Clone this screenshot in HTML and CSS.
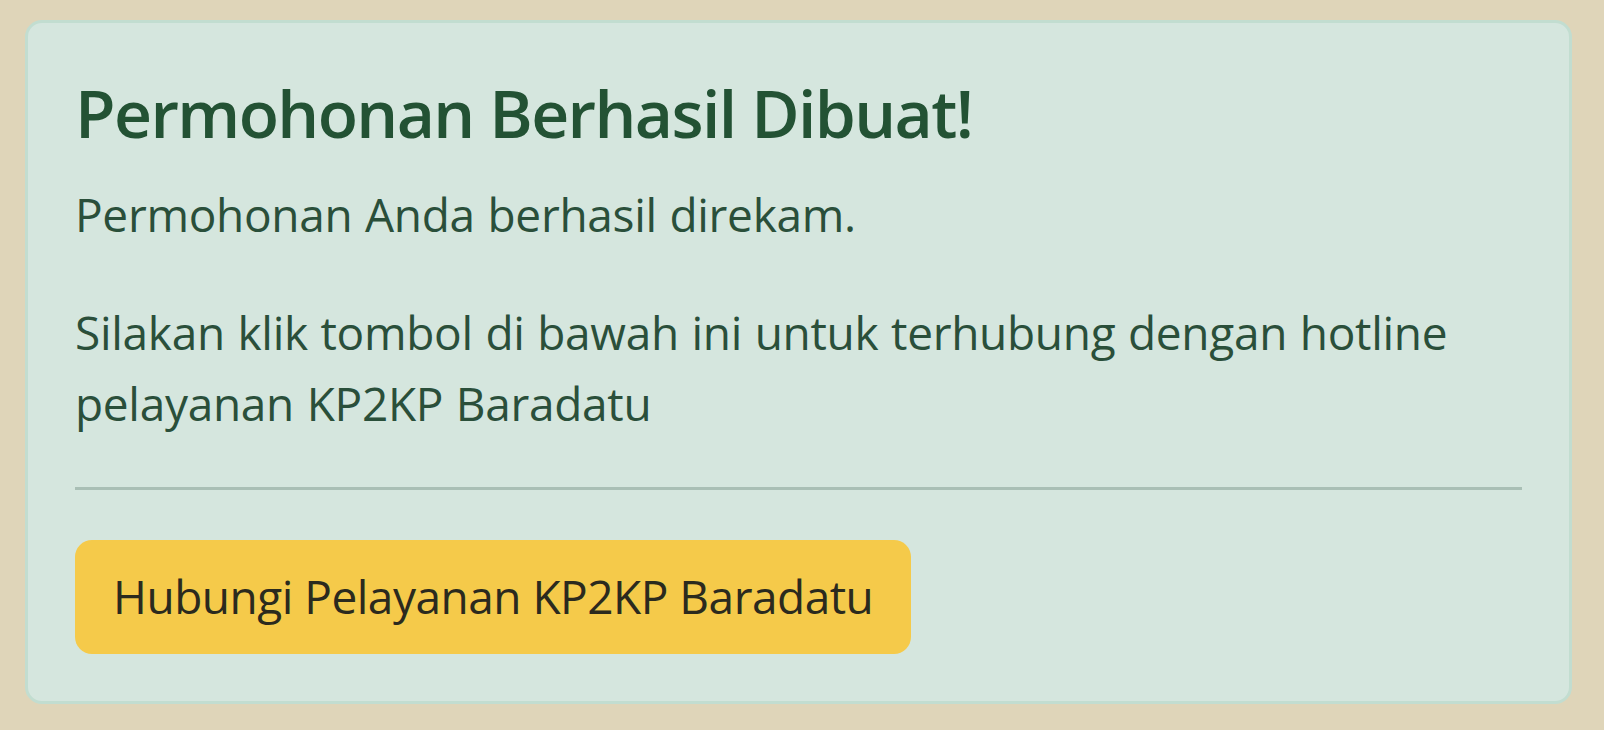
FILE: index.html
```html
<!DOCTYPE html>
<html lang="id">
<head>
<meta charset="utf-8">
<title>Permohonan Berhasil</title>
<link rel="stylesheet" href="styles.css">
</head>
<body>
<div class="page">
  <div class="alert">
    <h4 class="alert-heading">Permohonan Berhasil Dibuat!</h4>
    <p class="text">Permohonan Anda berhasil direkam.</p>
    <p class="text last">Silakan klik tombol di bawah ini untuk terhubung dengan hotline pelayanan KP2KP Baradatu</p>
    <hr class="divider">
    <a class="btn" href="#">Hubungi Pelayanan KP2KP Baradatu</a>
  </div>
</div>
</body>
</html>
```
FILE: styles.css
```css
html, body {
  margin: 0;
  padding: 0;
  background: #dfd5b9;
}
body {
  font-family: "Open Sans", "Noto Sans", sans-serif;
  width: 1604px;
  height: 730px;
  overflow: hidden;
}
.page {
  padding: 20px 32px 0 25px;
}
.alert {
  background: #d5e6de;
  border: 3px solid #c2ddd0;
  border-radius: 17px;
  padding: 47px;
  color: #2a4f3a;
}
.alert-heading {
  margin: 0 0 24px 0;
  font-size: 66px;
  line-height: 85px;
  font-weight: 600;
  letter-spacing: -1.6px;
  color: #235234;
}
.text {
  margin: 0 0 47px 0;
  font-size: 46px;
  line-height: 71px;
  letter-spacing: -0.3px;
  word-spacing: 1px;
}
.text.last {
  margin-bottom: 0;
}
.divider {
  border: 0;
  border-top: 3px solid #a9bfb5;
  margin: 48px 0 50px 0;
}
.btn {
  display: inline-block;
  background: #f5ca4a;
  color: #2b2a1e;
  text-decoration: none;
  font-size: 46px;
  line-height: 71px;
  letter-spacing: -0.5px;
  padding: 21px 38px 22px 38px;
  border-radius: 17px;
}
```
